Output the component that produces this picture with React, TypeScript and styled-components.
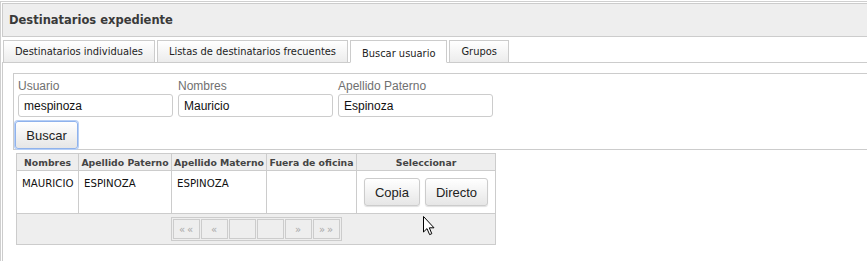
import React from "react";
import styled, { createGlobalStyle } from "styled-components";

const GlobalStyle = createGlobalStyle`
    body {
        margin: 0;
        padding-top: 1px;
        overflow: hidden;
        background: #ffffff;
        font-family: "DejaVu Sans", Verdana, sans-serif;
    }
`

const Frame = styled.div`
    position: relative;
    width: 880px;
    height: 270px;
    border-top: 1px solid #cfcfcf;
    border-left: 1px solid #cfcfcf;
    padding: 1px 0 0 1px;
`

const Header = styled.div`
    height: 32px;
    border: 1px solid #cccccc;
    background: #eeeeee;
    display: flex;
    align-items: center;
    padding-left: 6px;
    font-size: 11.5px;
    font-weight: bold;
    color: #3a3a3a;
`

const TabBar = styled.div`
    display: flex;
    gap: 2px;
    margin-top: 3px;
    padding-left: 1px;
    border-bottom: 1px solid #cccccc;
`

const Tab = styled.div<{ active?: boolean }>`
    box-sizing: border-box;
    height: 23px;
    padding: 0 11px;
    padding-top: ${p => p.active ? '3px' : '0'};
    margin-bottom: -1px;
    display: flex;
    align-items: center;
    border: 1px solid #cccccc;
    border-bottom: 1px solid ${p => p.active ? '#ffffff' : '#cccccc'};
    background: ${p => p.active ? '#ffffff' : 'linear-gradient(#ffffff, #ececec)'};
    font-size: 9.9px;
    color: #222222;
`

const Content = styled.div`
    border-left: 1px solid #cccccc;
    padding: 10px 0 0 10px;
    height: 200px;
`

const SearchBox = styled.div`
    border: 1px solid #cccccc;
    padding: 4px 0 0 1px;
    font-family: "Liberation Sans", Arial, sans-serif;
`

const Fields = styled.div`
    display: flex;
    gap: 5px;
    margin-left: 3px;
`

const Field = styled.label`
    display: flex;
    flex-direction: column;
    font-size: 12px;
    line-height: 16px;
    color: #707070;
`

const TextInput = styled.input`
    box-sizing: border-box;
    width: 155px;
    height: 23px;
    padding: 0 5px;
    border: 1px solid #cccccc;
    border-radius: 3px;
    font-family: "Liberation Sans", Arial, sans-serif;
    font-size: 12px;
    color: #111111;
    outline: none;
`

const Button = styled.button<{ focused?: boolean }>`
    box-sizing: border-box;
    height: 28px;
    padding: 0 10px;
    font-family: "Liberation Sans", Arial, sans-serif;
    font-size: 13px;
    color: #222222;
    background: linear-gradient(#ffffff, #e6e6e6);
    border: 1px solid ${p => p.focused ? '#8fb2ec' : '#cccccc'};
    border-radius: 3px;
    box-shadow: ${p => p.focused ? '0 0 0 1px #b7cff5' : '0 1px 1px rgba(0,0,0,0.12)'};
`

const SearchButton = styled(Button)`
    width: 63px;
    margin-top: 4px;
`

const Grid = styled.table`
    margin: 3px 0 0 3px;
    width: 480px;
    border-collapse: collapse;
    table-layout: fixed;
    border: 1px solid #cccccc;
`

const Th = styled.th`
    height: 16px;
    padding: 0;
    background: #eeeeee;
    border: 1px solid #cccccc;
    font-size: 9.3px;
    font-weight: bold;
    color: #444444;
    text-align: center;
    white-space: nowrap;
    overflow: hidden;
`

const Td = styled.td`
    height: 42px;
    padding: 7px 0 0 5px;
    box-sizing: border-box;
    vertical-align: top;
    border: 1px solid #cccccc;
    font-size: 10.2px;
    color: #111111;
`

const SelectCell = styled.td`
    height: 42px;
    padding: 0;
    border: 1px solid #cccccc;
    vertical-align: middle;
`

const ButtonGroup = styled.div`
    display: flex;
    justify-content: center;
    gap: 5px;
`

const FooterCell = styled.td`
    height: 30px;
    padding: 0;
    background: #eeeeee;
    border: 1px solid #cccccc;
`

const Pager = styled.div`
    width: fit-content;
    margin: 0 auto;
    display: flex;
    gap: 1px;
    padding: 1px;
    border: 1px solid #cccccc;
`

const PageButton = styled.div`
    width: 25px;
    height: 18px;
    border: 1px solid #cccccc;
    display: flex;
    align-items: center;
    justify-content: center;
    font-size: 10px;
    color: #a8a8a8;
`

const Cursor = styled.svg`
    position: absolute;
    left: 421px;
    top: 213px;
`

const columns = [
    { title: "Nombres", width: 62 },
    { title: "Apellido Paterno", width: 93 },
    { title: "Apellido Materno", width: 95 },
    { title: "Fuera de oficina", width: 90 },
    { title: "Seleccionar", width: 139 },
]

const rows = [
    { nombres: "MAURICIO", paterno: "ESPINOZA", materno: "ESPINOZA", fuera: "" },
]

const tabs = ["Destinatarios individuales", "Listas de destinatarios frecuentes", "Buscar usuario", "Grupos"]

const pages = ["«\u2009«", "«", "", "", "»", "»\u2009»"]

export default function App() {
    return (
        <>
            <GlobalStyle />
            <Frame>
                <Header>Destinatarios expediente</Header>
                <TabBar>
                    {tabs.map(t => <Tab key={t} active={t === "Buscar usuario"}>{t}</Tab>)}
                </TabBar>
                <Content>
                    <SearchBox>
                        <Fields>
                            <Field>Usuario<TextInput defaultValue="mespinoza" /></Field>
                            <Field>Nombres<TextInput defaultValue="Mauricio" /></Field>
                            <Field>Apellido Paterno<TextInput defaultValue="Espinoza" /></Field>
                        </Fields>
                        <SearchButton focused>Buscar</SearchButton>
                    </SearchBox>
                    <Grid>
                        <colgroup>
                            {columns.map(c => <col key={c.title} style={{ width: c.width }} />)}
                        </colgroup>
                        <thead>
                            <tr>{columns.map(c => <Th key={c.title}>{c.title}</Th>)}</tr>
                        </thead>
                        <tbody>
                            {rows.map(r => (
                                <tr key={r.nombres}>
                                    <Td>{r.nombres}</Td>
                                    <Td>{r.paterno}</Td>
                                    <Td>{r.materno}</Td>
                                    <Td>{r.fuera}</Td>
                                    <SelectCell>
                                        <ButtonGroup>
                                            <Button>Copia</Button>
                                            <Button>Directo</Button>
                                        </ButtonGroup>
                                    </SelectCell>
                                </tr>
                            ))}
                            <tr>
                                <FooterCell colSpan={5}>
                                    <Pager>
                                        {pages.map((p, i) => <PageButton key={i}>{p}</PageButton>)}
                                    </Pager>
                                </FooterCell>
                            </tr>
                        </tbody>
                    </Grid>
                </Content>
                <Cursor width="13" height="21" viewBox="0 0 13 21">
                    <path d="M1.5 1.5 L1.5 17 L5 13.6 L7.6 19.6 L9.8 18.7 L7.3 12.8 L12 12.8 Z" fill="#ffffff" stroke="#000000" strokeWidth="1" />
                </Cursor>
            </Frame>
        </>
    )
}
